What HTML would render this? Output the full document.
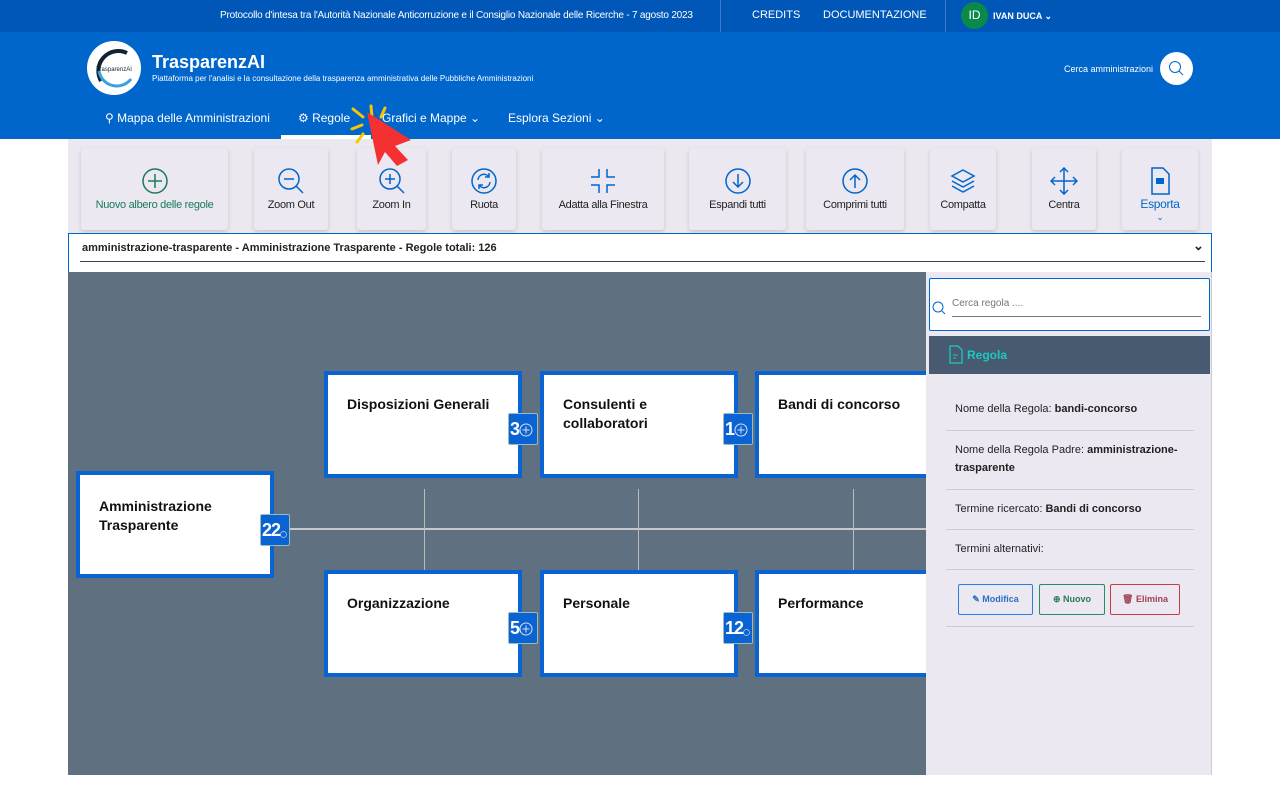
<!DOCTYPE html>
<html><head><meta charset="utf-8"><style>
*{box-sizing:border-box;margin:0;padding:0}
body{width:1280px;height:800px;overflow:hidden;background:#fff;font-family:"Liberation Sans",sans-serif;position:relative}
.top{position:absolute;left:0;top:0;width:1280px;height:32px;background:#0057b7;color:#fff;font-size:10px}
.top span{position:absolute;top:10px}
.hdr{position:absolute;left:0;top:32px;width:1280px;height:107px;background:#0066cc;color:#fff}
.tb{position:absolute;left:68px;top:139px;width:1144px;height:94px;background:#ebe8ef}
.btn{position:absolute;top:9px;height:82px;background:#ebe8f1;border-radius:3px;box-shadow:0 2px 4px rgba(0,0,0,.15);font-size:11px;color:#222;text-align:center;letter-spacing:-0.3px}
.btn svg{position:absolute;left:50%;top:19px;margin-left:-14px}
.btn .l{position:absolute;left:0;right:0;top:51px}
.sel{position:absolute;left:68px;top:233px;width:1144px;height:40px;border:1px solid #0066cc;background:#fff;font-size:11px;font-weight:bold;color:#222}
.canvas{position:absolute;left:68px;top:272px;width:858px;height:503px;background:#5f7080;overflow:hidden}
.node{position:absolute;width:198px;height:107px;background:#fff;border:4px solid #0a63d2;font-size:14px;font-weight:bold;color:#111;padding:20px 0 0 19px;line-height:19px}
.bdg{position:absolute;height:32px;background:#0a63d2;border:1px solid #9bb;color:#fff;font-size:18px;font-weight:bold;border-radius:2px;padding:5px 0 0 1px;line-height:20px;white-space:nowrap;overflow:visible;letter-spacing:-1px}
.bdg svg{vertical-align:-2px}
.side{position:absolute;left:926px;top:272px;width:286px;height:503px;background:#ebe8f2;border-right:1px solid #ccc}
.row{position:absolute;left:20px;width:248px;border-bottom:1px solid #ccc;font-size:11px;color:#222;line-height:18px}
</style></head><body>
<div class="top">
<span style="left:220px;letter-spacing:-0.2px">Protocollo d'intesa tra l'Autorità Nazionale Anticorruzione e il Consiglio Nazionale delle Ricerche - 7 agosto 2023</span>
<div style="position:absolute;left:720px;top:0;width:1px;height:32px;background:#3a7bd0"></div>
<span style="left:752px;top:9px;font-size:11px">CREDITS</span>
<span style="left:823px;top:9px;font-size:11px">DOCUMENTAZIONE</span>
<div style="position:absolute;left:945px;top:0;width:1px;height:32px;background:#3a7bd0"></div>
<div style="position:absolute;left:961px;top:2px;width:27px;height:27px;border-radius:50%;background:#0a8a4a;font-size:12px;text-align:center;line-height:27px">ID</div>
<span style="left:993px;top:11px;font-size:9px;font-weight:bold">IVAN DUCA ⌄</span>
</div>
<div class="hdr">
<div style="position:absolute;left:87px;top:9px;width:54px;height:54px;border-radius:50%;background:#fff;overflow:hidden">
<svg width="54" height="54"><path d="M14 40 A20 20 0 0 1 40 12" stroke="#123" stroke-width="4" fill="none"/><path d="M12 30 A18 18 0 0 0 44 38" stroke="#3aa0e0" stroke-width="3" fill="none"/><text x="27" y="30" font-size="6" text-anchor="middle" fill="#123" font-family="Liberation Sans">TrasparenzAI</text></svg></div>
<div style="position:absolute;left:152px;top:20px;font-size:18px;font-weight:bold">TrasparenzAI</div>
<div style="position:absolute;left:152px;top:42px;font-size:8px">Piattaforma per l'analisi e la consultazione della trasparenza amministrativa delle Pubbliche Amministrazioni</div>
<div style="position:absolute;left:1064px;top:32px;font-size:9px">Cerca amministrazioni</div>
<div style="position:absolute;left:1160px;top:20px;width:33px;height:33px;border-radius:50%;background:#fff"><svg width="33" height="33"><circle cx="15" cy="15" r="5.5" stroke="#0066cc" fill="none"/><path d="M19 19l4 4" stroke="#0066cc"/></svg></div>
<div style="position:absolute;left:105px;top:79px;font-size:12px">⚲ Mappa delle Amministrazioni</div>
<div style="position:absolute;left:298px;top:79px;font-size:12px">⚙ Regole</div>
<div style="position:absolute;left:281px;top:103px;width:90px;height:4px;background:#fff"></div>
<div style="position:absolute;left:382px;top:79px;font-size:12px">Grafici e Mappe ⌄</div>
<div style="position:absolute;left:508px;top:79px;font-size:12px">Esplora Sezioni ⌄</div>
</div>
<div class="tb">
<div class="btn" style="left:13px;width:147px;color:#1a7a5a"><svg width="28" height="28"><circle cx="14" cy="14" r="12" stroke="#1a7a5a" stroke-width="1.5" fill="none"/><path d="M14 7v14M7 14h14" stroke="#1a7a5a" stroke-width="1.5"/></svg><div class="l">Nuovo albero delle regole</div></div>
<div class="btn" style="left:186px;width:74px"><svg width="28" height="28"><circle cx="12" cy="12" r="10" stroke="#0066cc" stroke-width="1.5" fill="none"/><path d="M7 12h10M19 19l7 7" stroke="#0066cc" stroke-width="1.5"/></svg><div class="l">Zoom Out</div></div>
<div class="btn" style="left:289px;width:69px"><svg width="28" height="28"><circle cx="12" cy="12" r="10" stroke="#0066cc" stroke-width="1.5" fill="none"/><path d="M7 12h10M12 7v10M19 19l7 7" stroke="#0066cc" stroke-width="1.5"/></svg><div class="l">Zoom In</div></div>
<div class="btn" style="left:384px;width:64px"><svg width="28" height="28"><circle cx="14" cy="14" r="12" stroke="#0066cc" stroke-width="1.5" fill="none"/><path d="M8 13a6 6 0 0 1 11-3M20 15a6 6 0 0 1-11 3M19 6v4h-4M9 22v-4h4" stroke="#0066cc" stroke-width="1.5" fill="none"/></svg><div class="l">Ruota</div></div>
<div class="btn" style="left:474px;width:122px"><svg width="28" height="28"><path d="M10 2v8H2M18 2v8h8M10 26v-8H2M18 26v-8h8" stroke="#0066cc" stroke-width="1.5" fill="none"/></svg><div class="l">Adatta alla Finestra</div></div>
<div class="btn" style="left:621px;width:97px"><svg width="28" height="28"><circle cx="14" cy="14" r="12" stroke="#0066cc" stroke-width="1.5" fill="none"/><path d="M14 7v13M9 15l5 5 5-5" stroke="#0066cc" stroke-width="1.5" fill="none"/></svg><div class="l">Espandi tutti</div></div>
<div class="btn" style="left:738px;width:98px"><svg width="28" height="28"><circle cx="14" cy="14" r="12" stroke="#0066cc" stroke-width="1.5" fill="none"/><path d="M14 21V8M9 13l5-5 5 5" stroke="#0066cc" stroke-width="1.5" fill="none"/></svg><div class="l">Comprimi tutti</div></div>
<div class="btn" style="left:862px;width:66px"><svg width="28" height="28"><path d="M14 3l11 6-11 6-11-6zM3 14l11 6 11-6M3 19l11 6 11-6" stroke="#0066cc" stroke-width="1.5" fill="none"/></svg><div class="l">Compatta</div></div>
<div class="btn" style="left:964px;width:64px"><svg width="28" height="28"><path d="M14 1v26M1 14h26M10 5l4-4 4 4M10 23l4 4 4-4M5 10l-4 4 4 4M23 10l4 4-4 4" stroke="#0066cc" stroke-width="1.5" fill="none"/></svg><div class="l">Centra</div></div>
<div class="btn" style="left:1054px;width:76px;color:#0066cc;font-size:12px"><svg width="28" height="28"><path d="M6 1h11l6 6v20H6z" stroke="#0066cc" stroke-width="1.5" fill="none"/><rect x="10" y="11" width="8" height="6" fill="#0066cc"/></svg><div class="l" style="top:49px">Esporta</div><div style="position:absolute;left:0;right:0;top:64px;font-size:9px">⌄</div></div>
</div>
<div class="sel"><div style="position:absolute;left:13px;top:8px">amministrazione-trasparente - Amministrazione Trasparente - Regole totali: 126</div><div style="position:absolute;left:1124px;top:4px;font-size:13px">⌄</div><div style="position:absolute;left:11px;right:6px;top:27px;height:1px;background:#345"></div></div>
<div class="canvas">
<div style="position:absolute;left:222px;top:256px;width:640px;height:2px;background:#c8c8c8"></div>
<div style="position:absolute;left:356px;top:217px;width:1px;height:81px;background:#bbb"></div>
<div style="position:absolute;left:570px;top:217px;width:1px;height:81px;background:#bbb"></div>
<div style="position:absolute;left:785px;top:217px;width:1px;height:81px;background:#bbb"></div>
<div class="node" style="left:8px;top:199px;padding-top:22px">Amministrazione<br>Trasparente</div>
<div class="node" style="left:256px;top:99px">Disposizioni Generali</div>
<div class="node" style="left:472px;top:99px">Consulenti e<br>collaboratori</div>
<div class="node" style="left:687px;top:99px">Bandi di concorso</div>
<div class="node" style="left:256px;top:298px">Organizzazione</div>
<div class="node" style="left:472px;top:298px">Personale</div>
<div class="node" style="left:687px;top:298px">Performance</div>
<div class="bdg" style="left:192px;top:242px;width:30px">22<svg width="7" height="7"><circle cx="3.5" cy="3.5" r="3" stroke="#ccd" fill="none" stroke-width=".7"/></svg></div>
<div class="bdg" style="left:440px;top:141px;width:30px">3<svg width="14" height="14"><circle cx="7" cy="7" r="6" stroke="#dde" fill="none"/><path d="M7 3.5v7M3.5 7h7" stroke="#dde"/></svg></div>
<div class="bdg" style="left:655px;top:141px;width:30px">1<svg width="14" height="14"><circle cx="7" cy="7" r="6" stroke="#dde" fill="none"/><path d="M7 3.5v7M3.5 7h7" stroke="#dde"/></svg></div>
<div class="bdg" style="left:440px;top:340px;width:30px">5<svg width="14" height="14"><circle cx="7" cy="7" r="6" stroke="#dde" fill="none"/><path d="M7 3.5v7M3.5 7h7" stroke="#dde"/></svg></div>
<div class="bdg" style="left:655px;top:340px;width:30px">12<svg width="7" height="7"><circle cx="3.5" cy="3.5" r="3" stroke="#ccd" fill="none" stroke-width=".7"/></svg></div>
</div>
<div class="side">
<div style="position:absolute;left:3px;top:6px;width:281px;height:53px;background:#fff;border:1px solid #0066cc;border-radius:2px"><svg style="position:absolute;left:2px;top:22px" width="14" height="14"><circle cx="6" cy="6" r="5" stroke="#0066cc" fill="none"/><path d="M10 10l3 3" stroke="#0066cc"/></svg><div style="position:absolute;left:22px;top:19px;font-size:10px;color:#777">Cerca regola ....</div><div style="position:absolute;left:22px;right:8px;top:37px;height:1px;background:#778"></div></div>
<div style="position:absolute;left:3px;top:64px;width:281px;height:38px;background:#475a70"><svg style="position:absolute;left:20px;top:9px" width="14" height="19"><path d="M1 1h8l4 4v13H1z" stroke="#1cc8c0" fill="none" stroke-width="1.3"/><path d="M4 10h5M4 13h3" stroke="#1cc8c0"/></svg><div style="position:absolute;left:38px;top:12px;font-size:12px;font-weight:bold;color:#1cc8c0">Regola</div></div>
<div class="row" style="top:128px;height:31px;padding-left:9px">Nome della Regola: <b>bandi-concorso</b></div>
<div class="row" style="top:159px;height:59px;padding:10px 0 0 9px">Nome della Regola Padre: <b>amministrazione-trasparente</b></div>
<div class="row" style="top:218px;height:40px;padding:10px 0 0 9px">Termine ricercato: <b>Bandi di concorso</b></div>
<div class="row" style="top:258px;height:40px;padding:10px 0 0 9px">Termini alternativi:</div>
<div class="row" style="top:298px;height:57px"></div>
<div style="position:absolute;left:32px;top:312px;width:75px;height:31px;border:1.5px solid #2a7ee0;border-radius:2px;font-size:9px;font-weight:bold;color:#2a70c0;text-align:center;line-height:28px">✎ Modifica</div>
<div style="position:absolute;left:113px;top:312px;width:66px;height:31px;border:1.5px solid #2a8a60;border-radius:2px;font-size:9px;font-weight:bold;color:#2a7a50;text-align:center;line-height:28px">⊕ Nuovo</div>
<div style="position:absolute;left:184px;top:312px;width:70px;height:31px;border:1.5px solid #c04040;border-radius:2px;font-size:9px;font-weight:bold;color:#a04050;text-align:center;line-height:28px">🗑 Elimina</div>
</div>
<svg style="position:absolute;left:0;top:0" width="1280" height="800">
<g stroke="#f7c600" stroke-width="3" stroke-linecap="round"><path d="M353 109l10 8M371 106l1 11M385 108l-4 9M352 129l10-4M357 142l6-8"/></g>
<path d="M367 112L411 140L395 146L408 160L397 166L385 152L378 165Z" fill="#f43030"/>
</svg>
</body></html>
